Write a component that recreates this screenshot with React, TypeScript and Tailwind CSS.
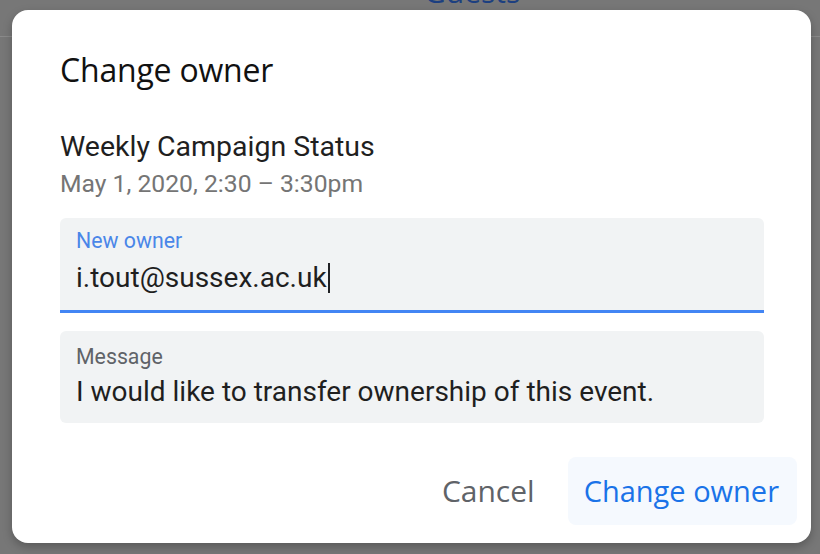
export default function App() {
  return (
    <div className="relative w-[820px] h-[554px] overflow-hidden bg-[#777777] font-['Roboto',sans-serif]">
      {/* page behind the scrim */}
      <div className="absolute left-[424px] top-[-26px] text-[30px] leading-[36px] text-[#1c3f80] font-['Open_Sans',sans-serif]">
        Guests
      </div>
      <div className="absolute left-0 right-0 top-[36px] h-px bg-[#8a8a8a]" />

      <div className="relative ml-[12px] mt-[10px] w-[799px] h-[533px] rounded-[16px] bg-white shadow-[0_4px_10px_rgba(0,0,0,0.25)] flex flex-col pl-[48px] pr-[47px]">
        <h2 className="mt-[40px] text-[32px] leading-[40px] text-[#111] font-['Open_Sans',sans-serif] tracking-[-0.2px]">
          Change owner
        </h2>

        <div className="mt-[39px] text-[28.5px] leading-[36px] text-[#1f1f1f]">Weekly Campaign Status</div>
        <div className="mt-[3px] text-[24.7px] leading-[32px] text-[#757575]">May 1, 2020, 2:30 – 3:30pm</div>

        <div className="mt-[18px] h-[95px] rounded-t-[6px] bg-[#f1f3f4] border-b-[3px] border-[#4285f4] px-[16px] pt-[11px]">
          <div className="text-[21.3px] leading-[24px] text-[#4a86e8]">New owner</div>
          <div className="mt-[8px] flex items-center text-[28px] leading-[34px] text-[#1f1f1f]">
            i.tout@sussex.ac.uk
            <span className="ml-[1px] w-[2px] h-[30px] bg-[#202124]" />
          </div>
        </div>

        <div className="mt-[18px] h-[92px] rounded-[6px] bg-[#f1f3f4] px-[16px] pt-[14px]">
          <div className="text-[21.3px] leading-[24px] text-[#5f6368]">Message</div>
          <div className="mt-[6px] text-[28px] leading-[34px] text-[#1f1f1f]">
            I would like to transfer ownership of this event.
          </div>
        </div>

        <div className="mt-[34px] flex items-center justify-end gap-[33px] -mr-[33px]">
          <button className="text-[30px] leading-[40px] text-[#5f6368] font-['Open_Sans',sans-serif]">Cancel</button>
          <button className="h-[68px] pl-[16px] pr-[18px] rounded-[8px] bg-[#f5f9fe] text-[29px] leading-[40px] text-[#1a73e8] font-['Open_Sans',sans-serif]">
            Change owner
          </button>
        </div>
      </div>
    </div>
  );
}
